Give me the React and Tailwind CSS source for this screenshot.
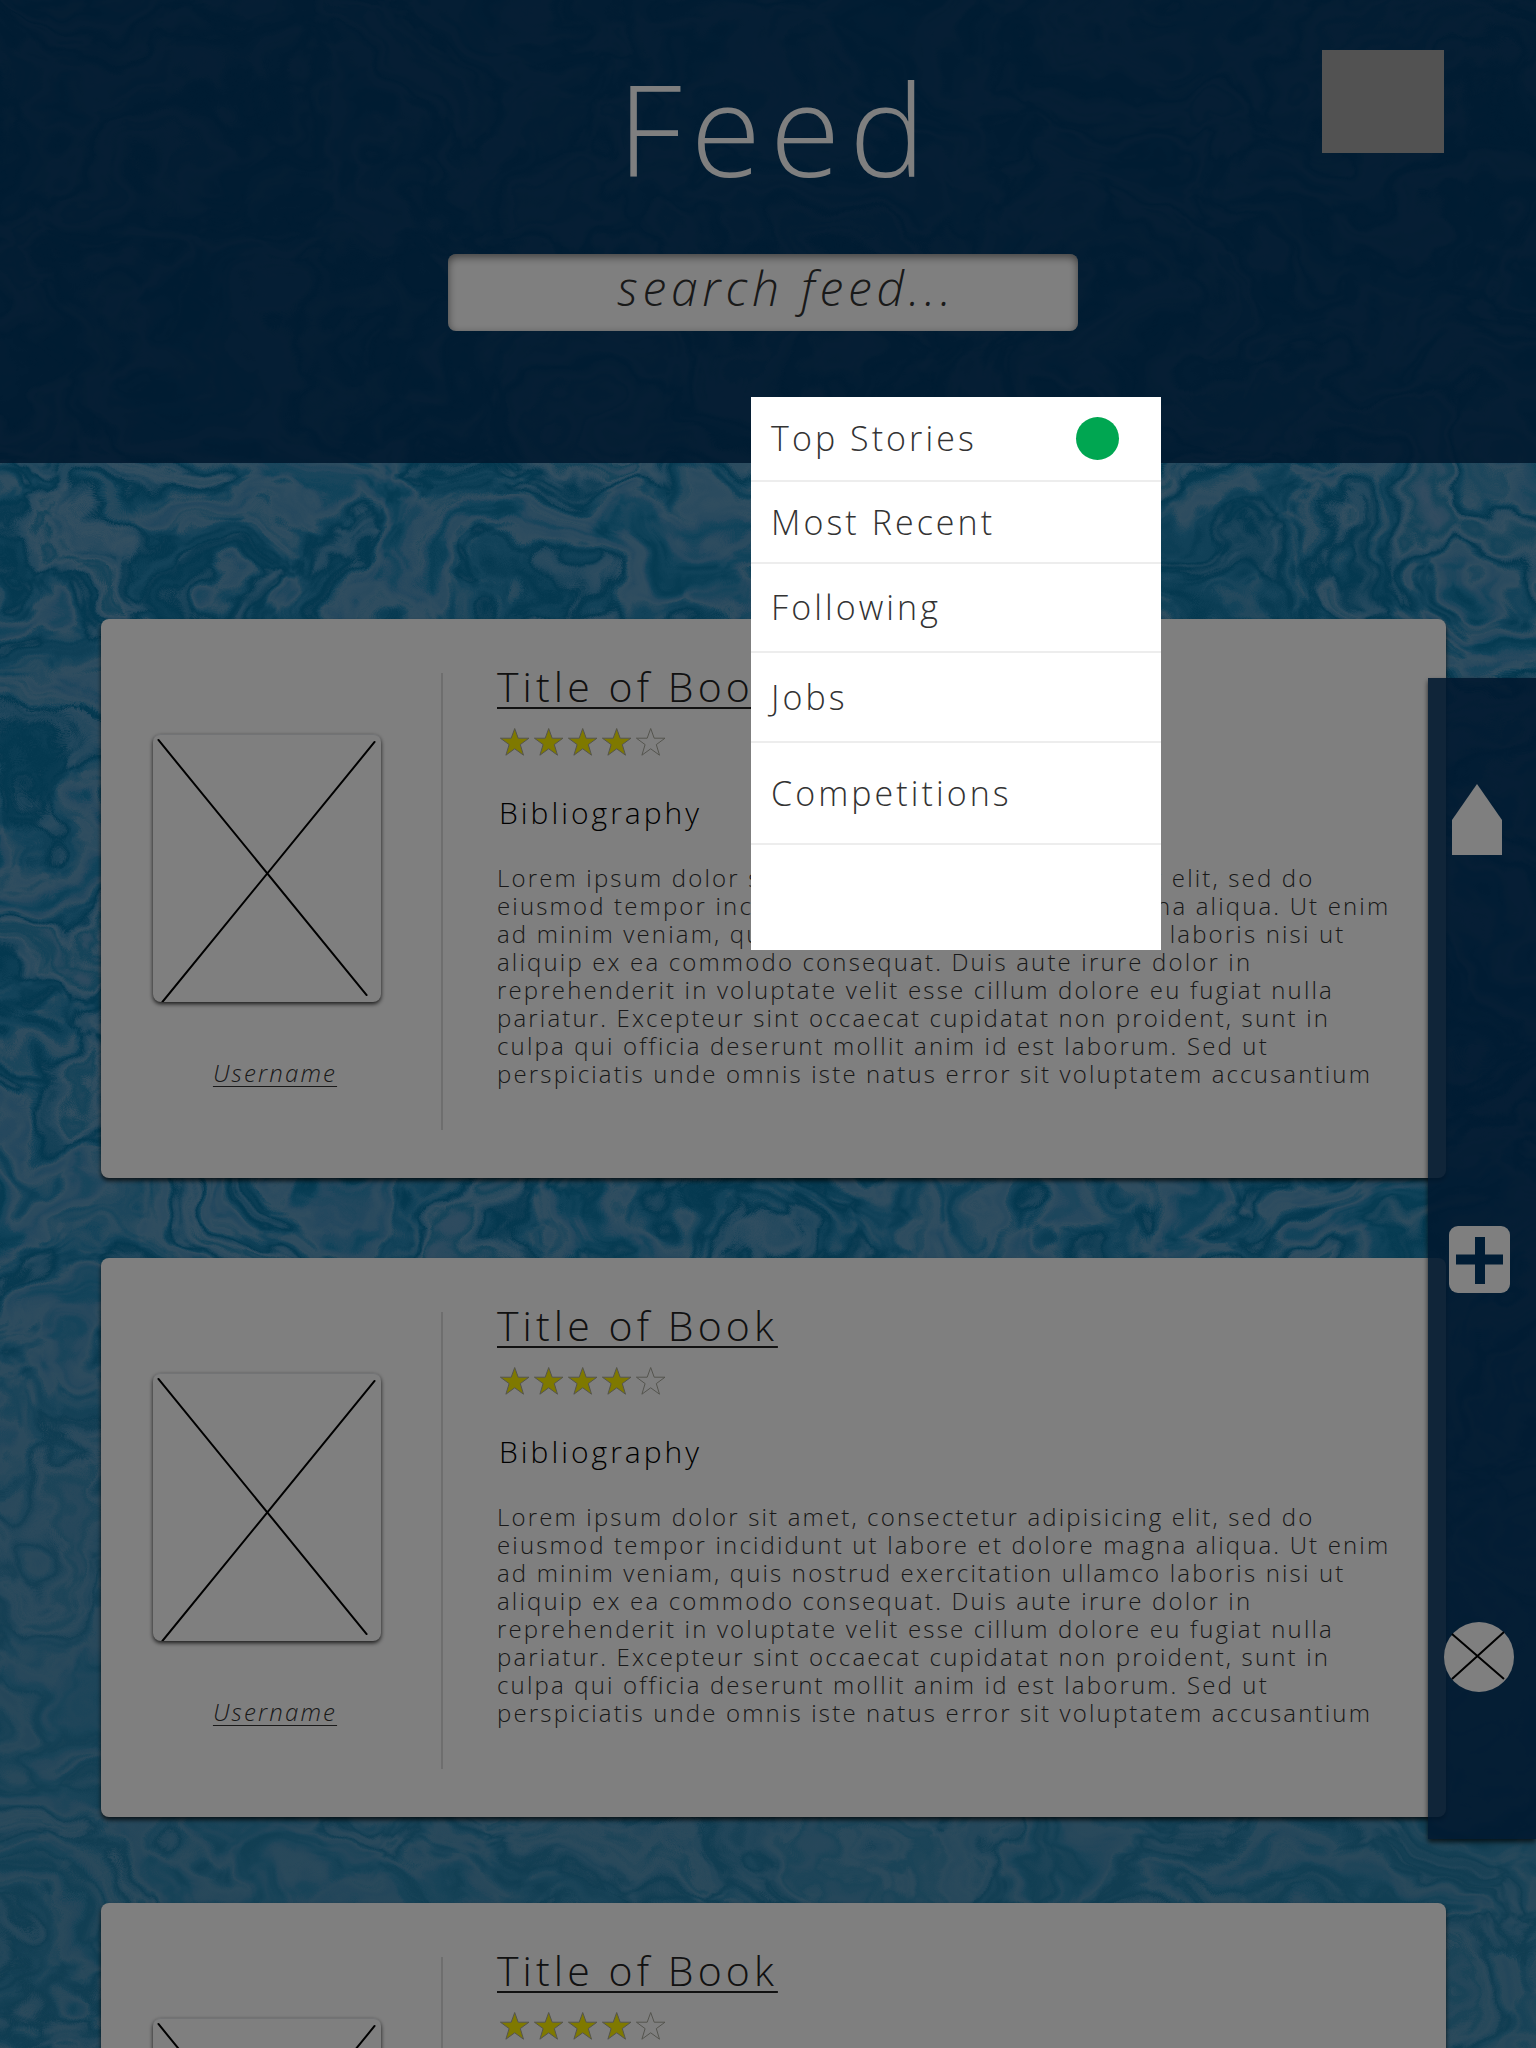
const FILTERS = [
  { name: "Top Stories", height: "h-[83px]", active: true },
  { name: "Most Recent", height: "h-20" },
  { name: "Following", height: "h-[87px]" },
  { name: "Jobs", height: "h-[88px]" },
  { name: "Competitions", height: "h-[100px]" },
];

const SUMMARY =
  "Lorem ipsum dolor sit amet, consectetur adipisicing elit, sed do eiusmod tempor incididunt ut labore et dolore magna aliqua. Ut enim ad minim veniam, quis nostrud exercitation ullamco laboris nisi ut aliquip ex ea commodo consequat. Duis aute irure dolor in reprehenderit in voluptate velit esse cillum dolore eu fugiat nulla pariatur. Excepteur sint occaecat cupidatat non proident, sunt in culpa qui officia deserunt mollit anim id est laborum. Sed ut perspiciatis unde omnis iste natus error sit voluptatem accusantium";

const POSTS = [
  { id: 1, title: "Title of Book", rating: 4, user: "Username", summary: SUMMARY },
  { id: 2, title: "Title of Book", rating: 4, user: "Username", summary: SUMMARY },
  { id: 3, title: "Title of Book", rating: 4 },
];

function Water() {
  return (
    <svg className="absolute inset-0 h-full w-full" aria-hidden="true">
      <defs>
        <filter id="water" x="0" y="0" width="100%" height="100%" colorInterpolationFilters="sRGB">
          <feTurbulence type="fractalNoise" baseFrequency="0.005 0.006" numOctaves="4" seed="23" result="flow" />
          <feTurbulence type="fractalNoise" baseFrequency="0.006 0.008" numOctaves="5" seed="7" result="base" />
          <feDisplacementMap in="base" in2="flow" scale="320" xChannelSelector="R" yChannelSelector="G" result="bent" />
          <feColorMatrix
            in="bent"
            type="matrix"
            values="1 0 0 0 0  1 0 0 0 0  1 0 0 0 0  0 0 0 0 1"
          />
          <feComponentTransfer>
            <feFuncR type="table" tableValues="0.3 0.3 0.3 0.36 0.2 0.04 0.14 0.3 0.38 0.16 0.03 0.26 0.4 0.16 0.32 0.4 0.3 0.3 0.3" />
            <feFuncG type="table" tableValues="0.56 0.56 0.56 0.6 0.54 0.46 0.53 0.57 0.61 0.53 0.44 0.56 0.62 0.53 0.58 0.6 0.56 0.56 0.56" />
            <feFuncB type="table" tableValues="0.72 0.72 0.72 0.74 0.71 0.64 0.71 0.74 0.75 0.71 0.62 0.73 0.76 0.7 0.74 0.76 0.72 0.72 0.72" />
          </feComponentTransfer>
        </filter>
        <linearGradient id="calm" x1="0" y1="0" x2="0" y2="1">
          <stop offset="0.6" stopColor="#4a8bb0" stopOpacity="0" />
          <stop offset="0.75" stopColor="#4a8bb0" stopOpacity="0.5" />
          <stop offset="1" stopColor="#3f86a8" stopOpacity="0.4" />
        </linearGradient>
      </defs>
      <rect x="-25%" y="-20%" width="150%" height="140%" filter="url(#water)" />
      <rect width="100%" height="100%" fill="url(#calm)" />
    </svg>
  );
}

function Star({ filled }) {
  return (
    <svg viewBox="0 0 34 30" className="h-[30px] w-[34px]" aria-hidden="true">
      <path
        d="M15.7 1.5 19.2 11.2H30L21.3 17.6 24.5 28.2 15.7 21.8 6.9 28.2 10.1 17.6 1.4 11.2H12.2Z"
        fill={filled ? "#fff200" : "none"}
        stroke="#a8a89c"
        strokeWidth="1"
      />
    </svg>
  );
}

function Post({ title, rating, user, summary }) {
  return (
    <article className="flex min-h-[559px] rounded-lg bg-white shadow-[0_3px_4px_rgba(0,0,0,0.7)] last:mt-1.5">
      <div className="flex w-[340px] shrink-0 flex-col items-center pt-[115px] pr-2">
        <div className="rounded-lg border-t border-gray-200 shadow-[0_2px_4px_rgba(0,0,0,0.8)]">
          <svg viewBox="0 0 228 268" className="block h-[267px] w-[228px]" role="img" aria-label="Book cover">
            <path d="M5 5 214 261M222 7 9 268" stroke="#000" strokeWidth="2" strokeLinecap="round" />
          </svg>
        </div>
        {user && (
          <a
            href="#user"
            className="mt-[55px] ml-4 text-2xl leading-8 tracking-[0.09em] italic underline decoration-1 underline-offset-4"
          >
            {user}
          </a>
        )}
      </div>
      <div className="mt-[54px] mb-12 w-0.5 bg-[#dcdcdc]" />
      <div className="flex-1 pt-[43px] pr-12 pl-[54px]">
        <h2 className="text-[41px] leading-[48px] text-[#222]">
          <a href="#book" className="tracking-widest underline decoration-2 underline-offset-[5px]">
            {title}
          </a>
        </h2>
        <div className="pl-0.5">
          <div className="mt-[17px] flex" role="img" aria-label={`${rating} out of 5 stars`}>
            {[1, 2, 3, 4, 5].map((n) => (
              <Star key={n} filled={n <= rating} />
            ))}
          </div>
          {summary && (
            <h3 className="mt-9 text-3xl leading-10 tracking-widest text-black">Bibliography</h3>
          )}
        </div>
        {summary && <p className="mt-[31px] text-2xl leading-7 tracking-[0.09em]">{summary}</p>}
      </div>
    </article>
  );
}

function SideNav() {
  return (
    <nav
      aria-label="Main"
      className="absolute top-[678px] right-0 flex w-[108px] flex-col items-center bg-[#002f5d]/87 pt-[106px] pr-1.5 pb-[147px] shadow-[0_3px_5px_rgba(0,0,0,0.7)]"
    >
      <button type="button" aria-label="Home" className="mr-1">
        <svg viewBox="0 0 50 71" className="block h-[71px] w-[50px]">
          <path d="M25 0 50 36V71H0V36Z" fill="#fff" />
        </svg>
      </button>
      <button type="button" aria-label="New post" className="mt-[371px]">
        <svg viewBox="0 0 61 67" className="block h-[67px] w-[61px]">
          <rect width="61" height="67" rx="9" fill="#fff" />
          <path d="M7 33.5H54M31 11V58" stroke="#003868" strokeWidth="10" />
        </svg>
      </button>
      <button type="button" aria-label="Profile" className="mt-[329px]">
        <svg viewBox="0 0 70 70" className="block size-[70px]">
          <circle cx="35" cy="35" r="35" fill="#fff" />
          <path d="M8 12 60 57M60 10 8 57" stroke="#000" strokeWidth="2" />
        </svg>
      </button>
    </nav>
  );
}

function FilterMenu() {
  return (
    <ul className="absolute top-[397px] right-[375px] w-[410px] bg-white pb-[105px]">
      {FILTERS.map(({ name, height, active }) => (
        <li key={name} className="border-b-2 border-[#ededed]">
          <button
            type="button"
            className={`flex w-full items-center justify-between pr-[42px] pl-5 text-[34px] tracking-[0.09em] text-[#333] ${height}`}
          >
            {name}
            {active && <span className="size-[43px] rounded-full bg-[#00a651]" />}
          </button>
        </li>
      ))}
    </ul>
  );
}

export default function App() {
  return (
    <div className="relative h-screen overflow-hidden font-['Open_Sans',sans-serif] font-light text-[#333]">
      <Water />
      <div className="relative">
        <header className="relative flex h-[463px] flex-col items-center bg-[#002f5b]/87">
          <h1 className="mt-12 pl-4 text-[128px] leading-[160px] tracking-[0.07em] text-white">Feed</h1>
          <input
            type="search"
            aria-label="Search feed"
            placeholder="search feed..."
            className="mt-[46px] mr-2.5 h-[77px] w-[630px] rounded-lg bg-white pb-2.5 pl-[72px] text-center text-5xl tracking-widest italic shadow-[inset_0_3px_8px_rgba(0,0,0,0.5)] placeholder:text-[#333]"
          />
          <button
            type="button"
            aria-label="Menu"
            className="absolute top-[50px] right-[92px] h-[103px] w-[122px] bg-[#a4a4a4]"
          />
        </header>
        <main className="flex flex-col gap-20 pt-[156px] pr-[90px] pl-[101px]">
          {POSTS.map(({ id, ...post }) => (
            <Post key={id} {...post} />
          ))}
        </main>
      </div>
      <SideNav />
      <div className="absolute inset-0 bg-black/50" />
      <FilterMenu />
    </div>
  );
}
